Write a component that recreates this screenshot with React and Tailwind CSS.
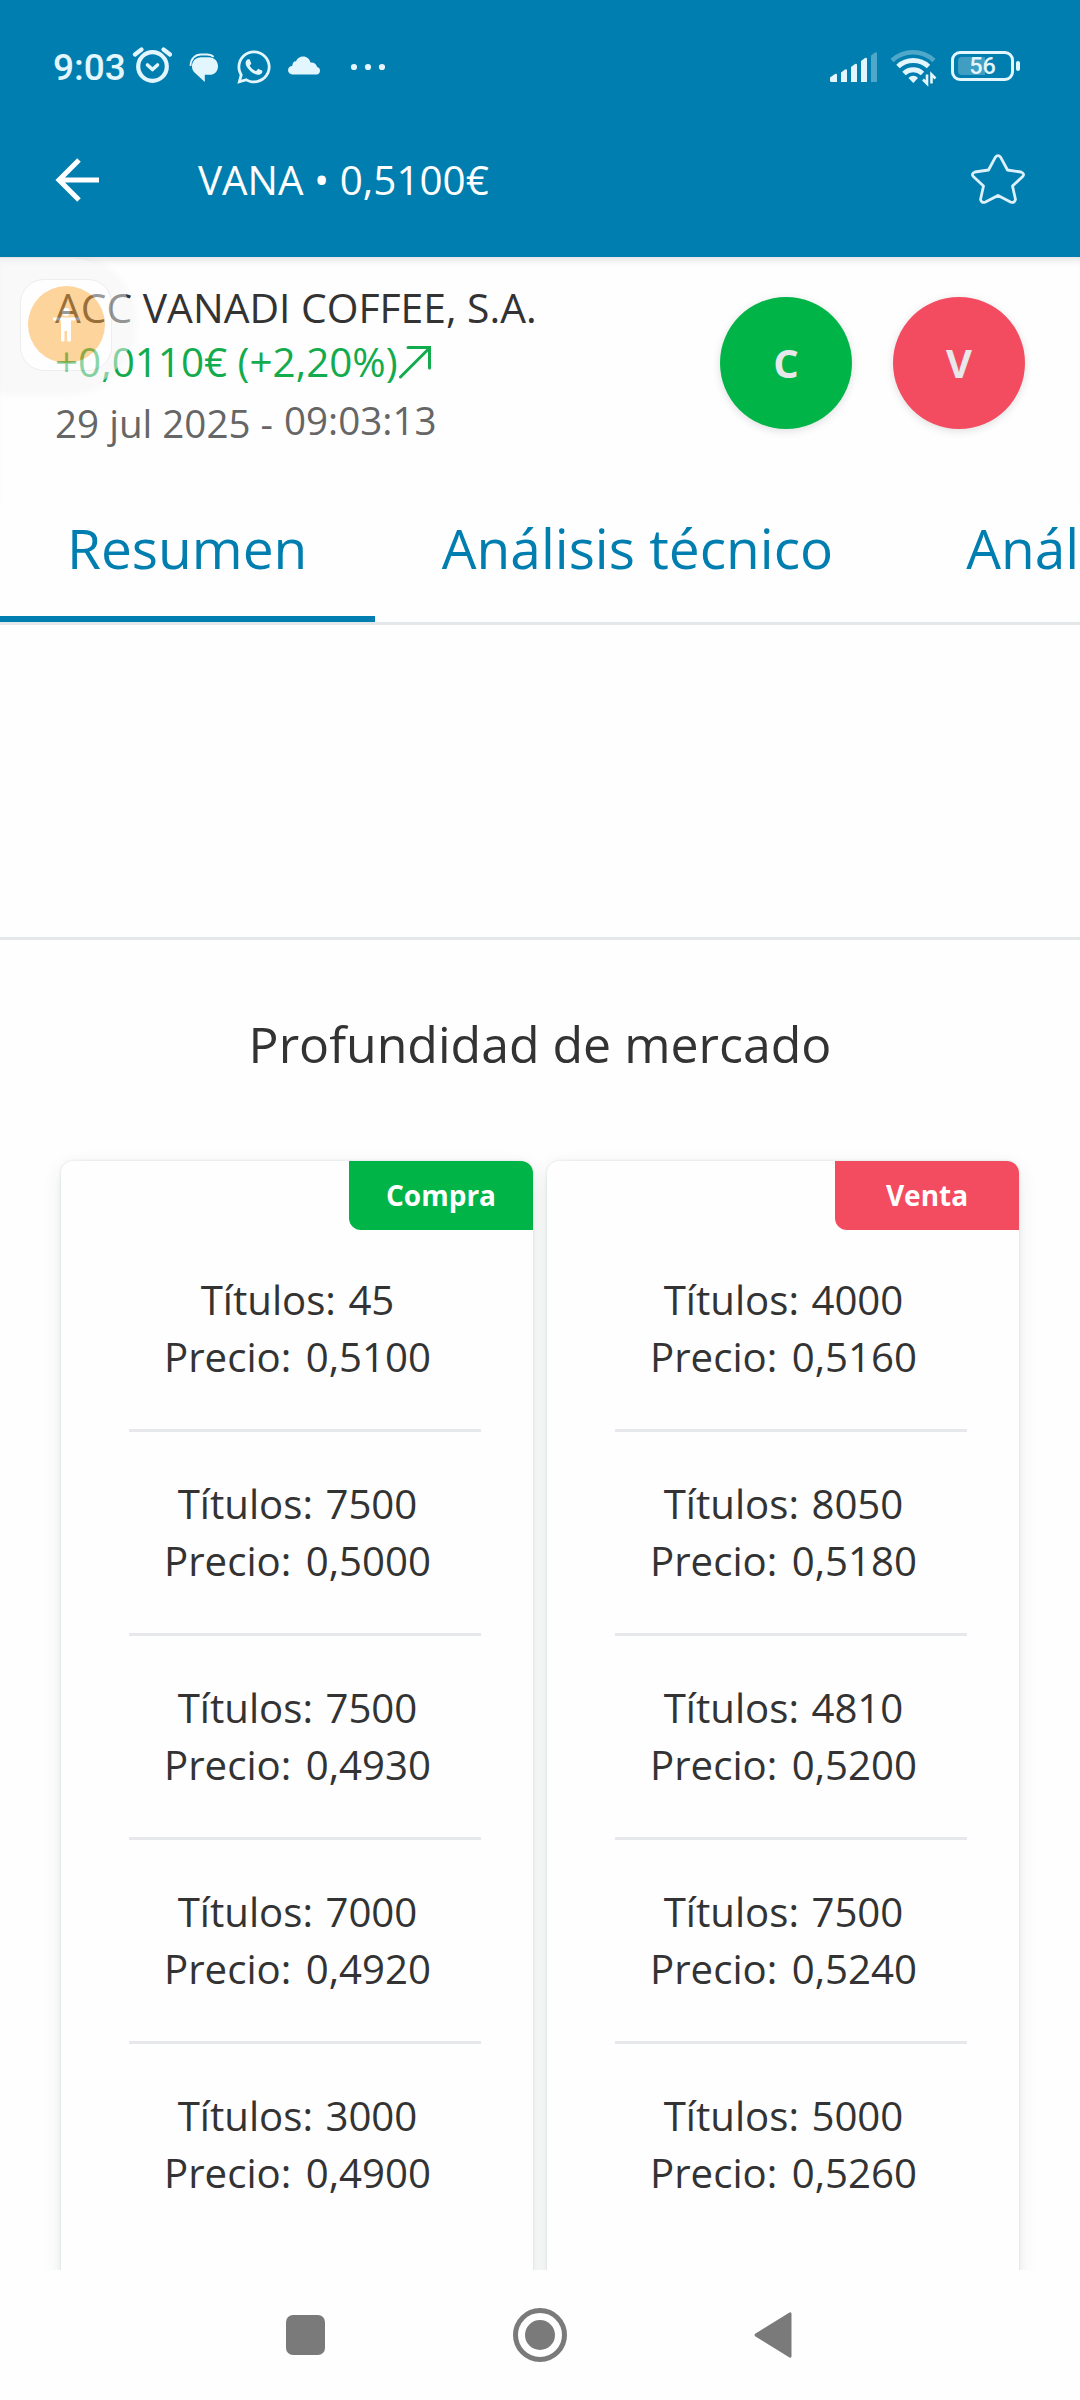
import { FaWhatsapp } from "react-icons/fa";

const compra = [
  { titulos: "45", precio: "0,5100" },
  { titulos: "7500", precio: "0,5000" },
  { titulos: "7500", precio: "0,4930" },
  { titulos: "7000", precio: "0,4920" },
  { titulos: "3000", precio: "0,4900" },
];

const venta = [
  { titulos: "4000", precio: "0,5160" },
  { titulos: "8050", precio: "0,5180" },
  { titulos: "4810", precio: "0,5200" },
  { titulos: "7500", precio: "0,5240" },
  { titulos: "5000", precio: "0,5260" },
];

const tabs = ["Resumen", "Análisis técnico", "Análisis"];

function StatusBar() {
  return (
    <div className="flex h-[104px] items-start justify-between pr-[60px] pl-[53px] text-[#e3f5fd]">
      <div className="flex items-center pt-[47px]">
        <span className="w-[79px] pt-[1px] font-['Roboto',sans-serif] text-[37px] leading-[40px] font-medium whitespace-nowrap">
          9:03
        </span>
        {/* Alarm */}
        <svg width="40" height="38" viewBox="0 0 40 38" fill="none" stroke="currentColor" strokeLinecap="round" strokeLinejoin="round" className="-mt-[3px] block">
          <circle cx="20.500" cy="19.500" r="14.300" strokeWidth="4.200" />
          <path d="M15.500 18l5 4.500 5-4.500" strokeWidth="3.600" />
          <path d="M3 7.500L9.500 2.500M38 7.500L31.500 2.500" strokeWidth="4.200" />
        </svg>
        {/* Messages */}
        <svg width="30" height="30" viewBox="0 0 30 30" fill="currentColor" className="ml-[17px] block">
          <path d="M1.500 13C1.500 6 6 1.500 12 1.500h6c3 0 5 .7 6.500 2.500" fill="none" stroke="currentColor" strokeWidth="1.800" />
          <path d="M12 4.200h8c5 0 9 3.800 9 9s-3.500 8.600-8.500 8.600H15.800V29L5.500 19.500C3.500 17.500 3 15.500 3 13.200 3 8 7 4.200 12 4.200z" />
        </svg>
        <FaWhatsapp size={38} className="ml-[16px] -mt-[2px]" />
        {/* Cloud */}
        <svg width="33" height="19" viewBox="0 0 33 19" fill="currentColor" className="ml-[15px] -mt-[4px] block">
          <path d="M4.500 18.500a4.300 4.300 0 0 1-.3-8.600C4.500 6.500 6 5 8 5.200 9.500 2 12 .5 15 .5c4 0 6.600 2.500 7.500 6 3.500-.3 6 1.500 6.600 4.600A3.800 3.800 0 0 1 29 18.500z" />
        </svg>
        <svg width="36" height="8" viewBox="0 0 36 8" fill="currentColor" className="ml-[29px] -mt-[2px] block">
          <circle cx="4" cy="4" r="3.100" />
          <circle cx="18" cy="4" r="3.100" />
          <circle cx="32" cy="4" r="3.100" />
        </svg>
      </div>

      <div className="flex items-start pt-[49px]">
        {/* Signal */}
        <svg width="50" height="34" viewBox="0 0 50 34" fill="currentColor" className="block">
          <path d="M1 28.500l5-3.500q2-1 2 1v7H2.500Q1 33 1 31.500z" />
          <path d="M12 23.500l4-3q2-1 2 1V33h-6z" />
          <path d="M22 18l4-3q2-1 2 1V33h-6z" />
          <path d="M32 12l4-3q2-1 2 1V33h-6z" />
          <path d="M42 6.500l4-3q2-1 2 1V33h-6z" opacity="0.35" />
        </svg>
        {/* Wifi */}
        <svg width="48" height="38" viewBox="0 0 48 38" fill="none" stroke="currentColor" className="ml-[11px] block">
          <path d="M2 11.500a31 31 0 0 1 42 0" strokeWidth="4.600" opacity="0.35" />
          <path d="M8 17.500a22.500 22.500 0 0 1 30.500 0" strokeWidth="5" />
          <path d="M14 24.500a13.500 13.500 0 0 1 18.500 0" strokeWidth="5" />
          <path d="M18.500 29c3-3 6.500-3 9.500 0l-4.700 5z" fill="currentColor" stroke="none" />
          <path d="M37 25.500v9l-4-4M41.500 34.500V25.500l4 4" strokeWidth="2.600" />
        </svg>
        {/* Battery */}
        <div className="ml-[13px] mt-[2px] flex items-center">
          <div className="relative flex h-[30px] w-[63px] items-center justify-center rounded-[9px] border-[3px] border-[#e3f5fd]">
            <span className="absolute top-[3px] left-[4px] h-[18px] w-[27px] rounded-l-[4px] bg-white/25" />
            <span className="relative pt-[2px] font-['Roboto',sans-serif] text-[23.5px] leading-none font-medium">
              56
            </span>
          </div>
          <span className="ml-[2px] h-[10px] w-[4px] rounded-full bg-[#e3f5fd]" />
        </div>
      </div>
    </div>
  );
}

function TitleBar() {
  return (
    <div className="flex h-[153px] items-start pt-[50px] pr-[55px] pl-[55px]">
      <svg width="44" height="44" viewBox="0 0 44 44" fill="none" stroke="white" strokeWidth="5" className="mt-[4px] block">
        <path d="M44 22H4M24 2L4 22l20 20" />
      </svg>
      <h1 className="ml-[99px] text-[40.4px] leading-[52px] whitespace-nowrap text-white">
        VANA • 0,5100€
      </h1>
      <svg width="54" height="50" viewBox="0 0 54 50" fill="none" stroke="#dcf1fb" strokeWidth="2.800" strokeLinejoin="round" className="ml-auto block">
        <path d="M24.300 3.300Q27 0 29.700 3.300L36.500 16 50 18Q54 19.500 51.700 22.500L41.500 32 44.500 45.500Q43.500 49.500 39.500 48L27 41.500 14.500 48Q10.500 49.500 9.500 45.500L12.500 32 2.300 22.500Q0 19.500 4 18L17.500 16z" />
      </svg>
    </div>
  );
}

// Floating accessibility shortcut docked on the left edge
function FloatingShortcut() {
  return (
    <div className="absolute top-[258px] left-0 flex h-[133px] w-[132px] items-center rounded-r-[64px] bg-[#f5f5f5] pl-[20px] opacity-50 shadow-[0_0_10px_rgba(0,0,0,0.08)]">
      <div className="flex h-[92px] w-[92px] items-center justify-center rounded-[24px] border border-[#dfdfdf] bg-white">
        <div className="flex h-[77px] w-[77px] items-center justify-center rounded-full bg-[#ffab3f]">
          <svg width="28" height="34" viewBox="0 0 28 34" fill="white">
            <circle cx="14" cy="4" r="4" />
            <path d="M1 9.500h26v3h-8v20q0 1-1 1h-2q-1 0-1-1V23h-2.500v9.500q0 1-1 1h-1.500q-1 0-1-1V12.500H1z" />
          </svg>
        </div>
      </div>
    </div>
  );
}

function StockSummary() {
  return (
    <section className="flex h-[243px] justify-between pt-[23px] pr-[55px] pl-[55px] shadow-[inset_0_8px_8px_-6px_rgba(0,0,0,0.14)]">
      <div className="whitespace-nowrap">
        <p className="mb-[1px] text-[40.8px] leading-[54px] text-[#333333]">ACC VANADI COFFEE, S.A.</p>
        <p className="flex items-start text-[40.4px] leading-[54px] text-[#12ab4d]">
          +0,0110€ (+2,20%)
          <svg width="34" height="34" viewBox="0 0 34 34" fill="none" stroke="currentColor" strokeWidth="3" strokeLinecap="round" className="mt-[10px] block">
            <path d="M2.500 32L31.500 3M10 2.500h21.500V23" />
          </svg>
        </p>
        <p className="flex text-[38.6px] leading-[54px] text-[#666666]">
          <span className="mt-[7px]">29 jul 2025 -&nbsp;</span>
          <span className="mt-[4px] ml-[1px]">09:03:13</span>
        </p>
      </div>
      <div className="flex gap-[41px] pt-[17px] text-[40px] font-bold text-[#e8e8ec]">
        <button className="h-[132px] w-[132px] rounded-full bg-[#00b448] shadow-[0_2px_8px_rgba(0,0,0,0.13)]">
          C
        </button>
        <button className="h-[132px] w-[132px] rounded-full bg-[#f34b60] shadow-[0_2px_8px_rgba(0,0,0,0.13)]">
          V
        </button>
      </div>
    </section>
  );
}

function Tabs() {
  return (
    <nav className="flex h-[125px] overflow-hidden border-b-[3px] border-[#e4e8ea] text-[55px] text-[#007eaf]">
      {tabs.map((tab, i) => (
        <div
          key={tab}
          className={
            i === 0
              ? "h-[122px] shrink-0 border-b-[6px] border-[#007eaf] pr-[68px] pl-[67px] pt-[10px] leading-[75px] whitespace-nowrap"
              : "h-[122px] shrink-0 px-[66.5px] pt-[10px] leading-[75px] whitespace-nowrap"
          }
        >
          {tab}
        </div>
      ))}
    </nav>
  );
}

function DepthCard({ label, badgeClass, rows }) {
  return (
    <div className="h-[1200px] w-[472px] rounded-[12px] bg-[#fefefe] shadow-[0_0_3px_rgba(20,50,50,0.12),0_5px_18px_rgba(20,60,50,0.1)]">
      <div className="flex justify-end">
        <span className={`${badgeClass} flex h-[69px] w-[184px] items-center justify-center rounded-tr-[12px] rounded-bl-[12px] pb-[2px] text-[28px] font-bold text-white`}>
          {label}
        </span>
      </div>
      <div className="pt-[41px] pr-[52px] pl-[68px]">
        {rows.map((row, i) => (
          <div
            key={i}
            className="mb-[43px] h-[161px] border-b-[3px] border-[#e6e8ec] pr-[15px] text-center text-[40.2px] leading-[57px] whitespace-nowrap text-[#333333] last:border-b-0"
          >
            <p className="[word-spacing:2px]">Títulos: {row.titulos}</p>
            <p className="[word-spacing:4px]">Precio: {row.precio}</p>
          </div>
        ))}
      </div>
    </div>
  );
}

function NavBar() {
  return (
    <footer className="flex h-[130px] shrink-0 items-center justify-between bg-[#fefefe] pr-[288px] pl-[286px]">
      <span className="h-[40px] w-[39px] rounded-[7px] bg-[#7a7a7a]" />
      <span className="flex h-[54px] w-[54px] items-center justify-center rounded-full border-[5px] border-[#7a7a7a]">
        <span className="h-[30px] w-[30px] rounded-full bg-[#7a7a7a]" />
      </span>
      <svg width="38" height="46" viewBox="0 0 38 46" fill="#7a7a7a">
        <path d="M35.500 .6Q37.500-.5 37.500 2v42q0 2.500-2 1.400L1.500 24.600Q-.5 23 1.500 21.400z" />
      </svg>
    </footer>
  );
}

export default function App() {
  return (
    <div className="relative flex h-[2400px] w-[1080px] flex-col overflow-hidden bg-[#fefefe] font-['Open_Sans',sans-serif]">
      <header className="shrink-0 bg-[#007eaf]">
        <StatusBar />
        <TitleBar />
      </header>
      <main className="min-h-0 flex-1 overflow-hidden">
        <StockSummary />
        <Tabs />
        <div className="h-[315px] border-b-[3px] border-[#e4e8ea]" />
        <h2 className="pt-[70px] text-center text-[50px] leading-[68px] text-[#333333]">
          Profundidad de mercado
        </h2>
        <div className="flex gap-[14px] pt-[83px] pl-[61px]">
          <DepthCard label="Compra" badgeClass="bg-[#00b448]" rows={compra} />
          <DepthCard label="Venta" badgeClass="bg-[#f34b60]" rows={venta} />
        </div>
      </main>
      <NavBar />
      <FloatingShortcut />
    </div>
  );
}
